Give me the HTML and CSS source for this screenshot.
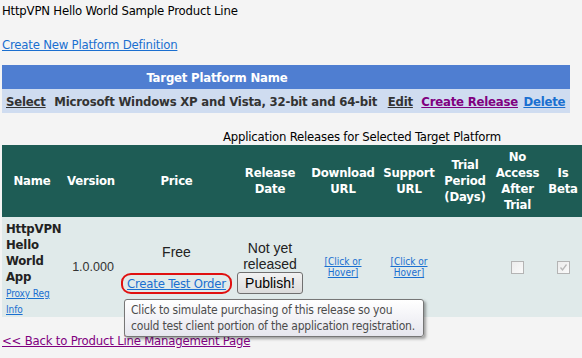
FILE: index.html
```html
<!DOCTYPE html>
<html>
<head>
<meta charset="utf-8">
<link rel="stylesheet" href="styles.css">
</head>
<body>
<div class="title">HttpVPN Hello World Sample Product Line</div>
<a class="newlink" href="#">Create New Platform Definition</a>

<table class="platforms">
  <tr class="ph">
    <th></th>
    <th class="ph-name">Target Platform Name</th>
    <th></th><th></th><th></th>
  </tr>
  <tr class="pr">
    <td><a class="dark" href="#">Select</a></td>
    <td class="pname">Microsoft Windows XP and Vista, 32-bit and 64-bit</td>
    <td><a class="dark" href="#">Edit</a></td>
    <td><a class="visited" href="#">Create Release</a></td>
    <td class="pdel"><a class="blue" href="#">Delete</a></td>
  </tr>
</table>

<div class="caption">Application Releases for Selected Target Platform</div>

<div class="releases-wrap">
<table class="releases">
  <colgroup>
    <col style="width:60px"><col style="width:58px"><col style="width:113px"><col style="width:74px"><col style="width:72px"><col style="width:60px"><col style="width:52px"><col style="width:53px"><col style="width:38px">
  </colgroup>
  <tr class="rh">
    <th>Name</th><th>Version</th><th>Price</th><th>Release<br>Date</th><th>Download<br>URL</th><th>Support<br>URL</th><th>Trial<br>Period<br>(Days)</th><th>No<br>Access<br>After<br>Trial</th><th>Is<br>Beta</th>
  </tr>
  <tr class="rb">
    <td class="appname"><b>HttpVPN<br>Hello<br>World<br>App</b><br><a class="small" href="#">Proxy Reg<br>Info</a></td>
    <td class="version">1.0.000</td>
    <td class="price"><div class="arial free">Free</div><a class="testorder" href="#">Create Test Order</a></td>
    <td class="release"><div class="arial">Not yet<br>released</div><button class="publish">Publish!</button></td>
    <td><a class="tiny" href="#">[Click or<br>Hover]</a></td>
    <td><a class="tiny" href="#">[Click or<br>Hover]</a></td>
    <td></td>
    <td><span class="cb"></span></td>
    <td><span class="cb"><svg width="11" height="11" viewBox="0 0 11 11"><path d="M2.5 5.5 L4.5 8 L8.5 2.5" fill="none" stroke="#b8b8b8" stroke-width="1.3"/></svg></span></td>
  </tr>
</table>
<div class="tooltip">Click to simulate purchasing of this release so you<br>could test client portion of the application registration.</div>
</div>

<a class="back" href="#">&lt;&lt; Back to Product Line Management Page</a>
</body>
</html>
```

FILE: styles.css
```css
html, body {
  margin: 0;
  padding: 0;
  background: #f4f4f4;
}
body {
  font-family: "DejaVu Sans Condensed", "DejaVu Sans", sans-serif;
  font-size: 13px;
  letter-spacing: -0.2px;
  color: #000;
  padding: 3px 2px 0 2px;
  width: 580px;
  overflow: hidden;
}
.title {
  line-height: 16px;
  height: 16px;
}
.newlink {
  display: block;
  margin-top: 18px;
  line-height: 16px;
  color: #1a6fd0;
  width: max-content;
}
.platforms {
  margin-top: 12px;
  border-collapse: collapse;
  width: 568px;
  font-weight: bold;
}
.platforms th, .platforms td {
  padding: 0 4px;
  white-space: nowrap;
}
.ph {
  background: #4f7ed1;
  color: #fff;
  height: 24px;
}
.ph-name {
  text-align: center;
}
.pr {
  background: #cfdcf0;
  color: #333;
  height: 24px;
}
.pr td { text-align: left; }
.pname { padding-right: 2px !important; }
.pdel { padding-left: 0 !important; }
a.dark { color: #333; }
a.visited { color: #800080; }
a.blue { color: #1a6fd0; }
.caption {
  margin-top: 16px;
  padding-left: 221px;
  line-height: 16px;
  height: 16px;
}
.releases-wrap {
  position: relative;
}
.releases {
  border-collapse: collapse;
  table-layout: fixed;
  width: 580px;
}
.releases th, .releases td {
  padding: 0;
  text-align: center;
}
.rh {
  background: #1e5c55;
  color: #fff;
  height: 72px;
}
.rh th {
  font-weight: bold;
  line-height: 16px;
}
.rb {
  background: #e0eaea;
  height: 100px;
}
.rb td { vertical-align: middle; }
.appname {
  text-align: left !important;
  vertical-align: top !important;
  padding: 4px 0 0 4px !important;
  line-height: 16px;
  color: #222;
}
.small {
  font-size: 10px;
  line-height: 14px;
  color: #1a6fd0;
  letter-spacing: -0.1px;
}
.version {
  font-family: "Liberation Sans Narrow", "Liberation Sans", Arial, sans-serif;
  font-size: 12.5px;
  letter-spacing: 0;
  color: #333;
  padding-left: 4px !important;
}
.arial {
  font-family: "Liberation Sans", Arial, sans-serif;
  font-size: 14px;
  letter-spacing: 0;
  line-height: 16px;
  color: #222;
}
.free { margin-bottom: 13px; margin-top: 3px; }
.testorder {
  display: inline-block;
  color: #1a6fd0;
  font-size: 13px;
  line-height: 15px;
  padding: 1px 4px;
  border: 2px solid #e01010;
  border-radius: 10px / 9px;
}
.release .arial { margin-top: 0; }
.publish {
  font-family: "Liberation Sans", Arial, sans-serif;
  font-size: 14px;
  margin-top: 0;
  height: 22px;
  width: 66px;
  padding: 0;
  border: 1px solid #707070;
  border-radius: 3px;
  background: linear-gradient(#f2f2f2, #dcdcdc);
  color: #000;
}
.tiny {
  font-size: 10px;
  line-height: 11px;
  letter-spacing: 0;
  color: #1a6fd0;
  display: inline-block;
  margin-top: 1px;
}
.cb {
  display: inline-block;
  width: 11px;
  height: 11px;
  border: 1px solid #b4b4b4;
  background: linear-gradient(135deg, #ececec, #fafafa);
  vertical-align: middle;
  margin-top: -1px;
}
.cb svg { display: block; }
.tooltip {
  position: absolute;
  left: 122px;
  top: 154px;
  width: 286px;
  padding: 2px 6px 2px 6px;
  font-size: 12px;
  letter-spacing: -0.2px;
  line-height: 16px;
  color: #4c4c4c;
  background: linear-gradient(#ffffff, #e6e6ee);
  border: 1px solid #767676;
  border-radius: 3px;
  box-shadow: 2px 2px 3px rgba(0,0,0,0.35);
  white-space: nowrap;
}
.back {
  display: block;
  margin-top: 16px;
  color: #800080;
  line-height: 16px;
  width: max-content;
}
```
